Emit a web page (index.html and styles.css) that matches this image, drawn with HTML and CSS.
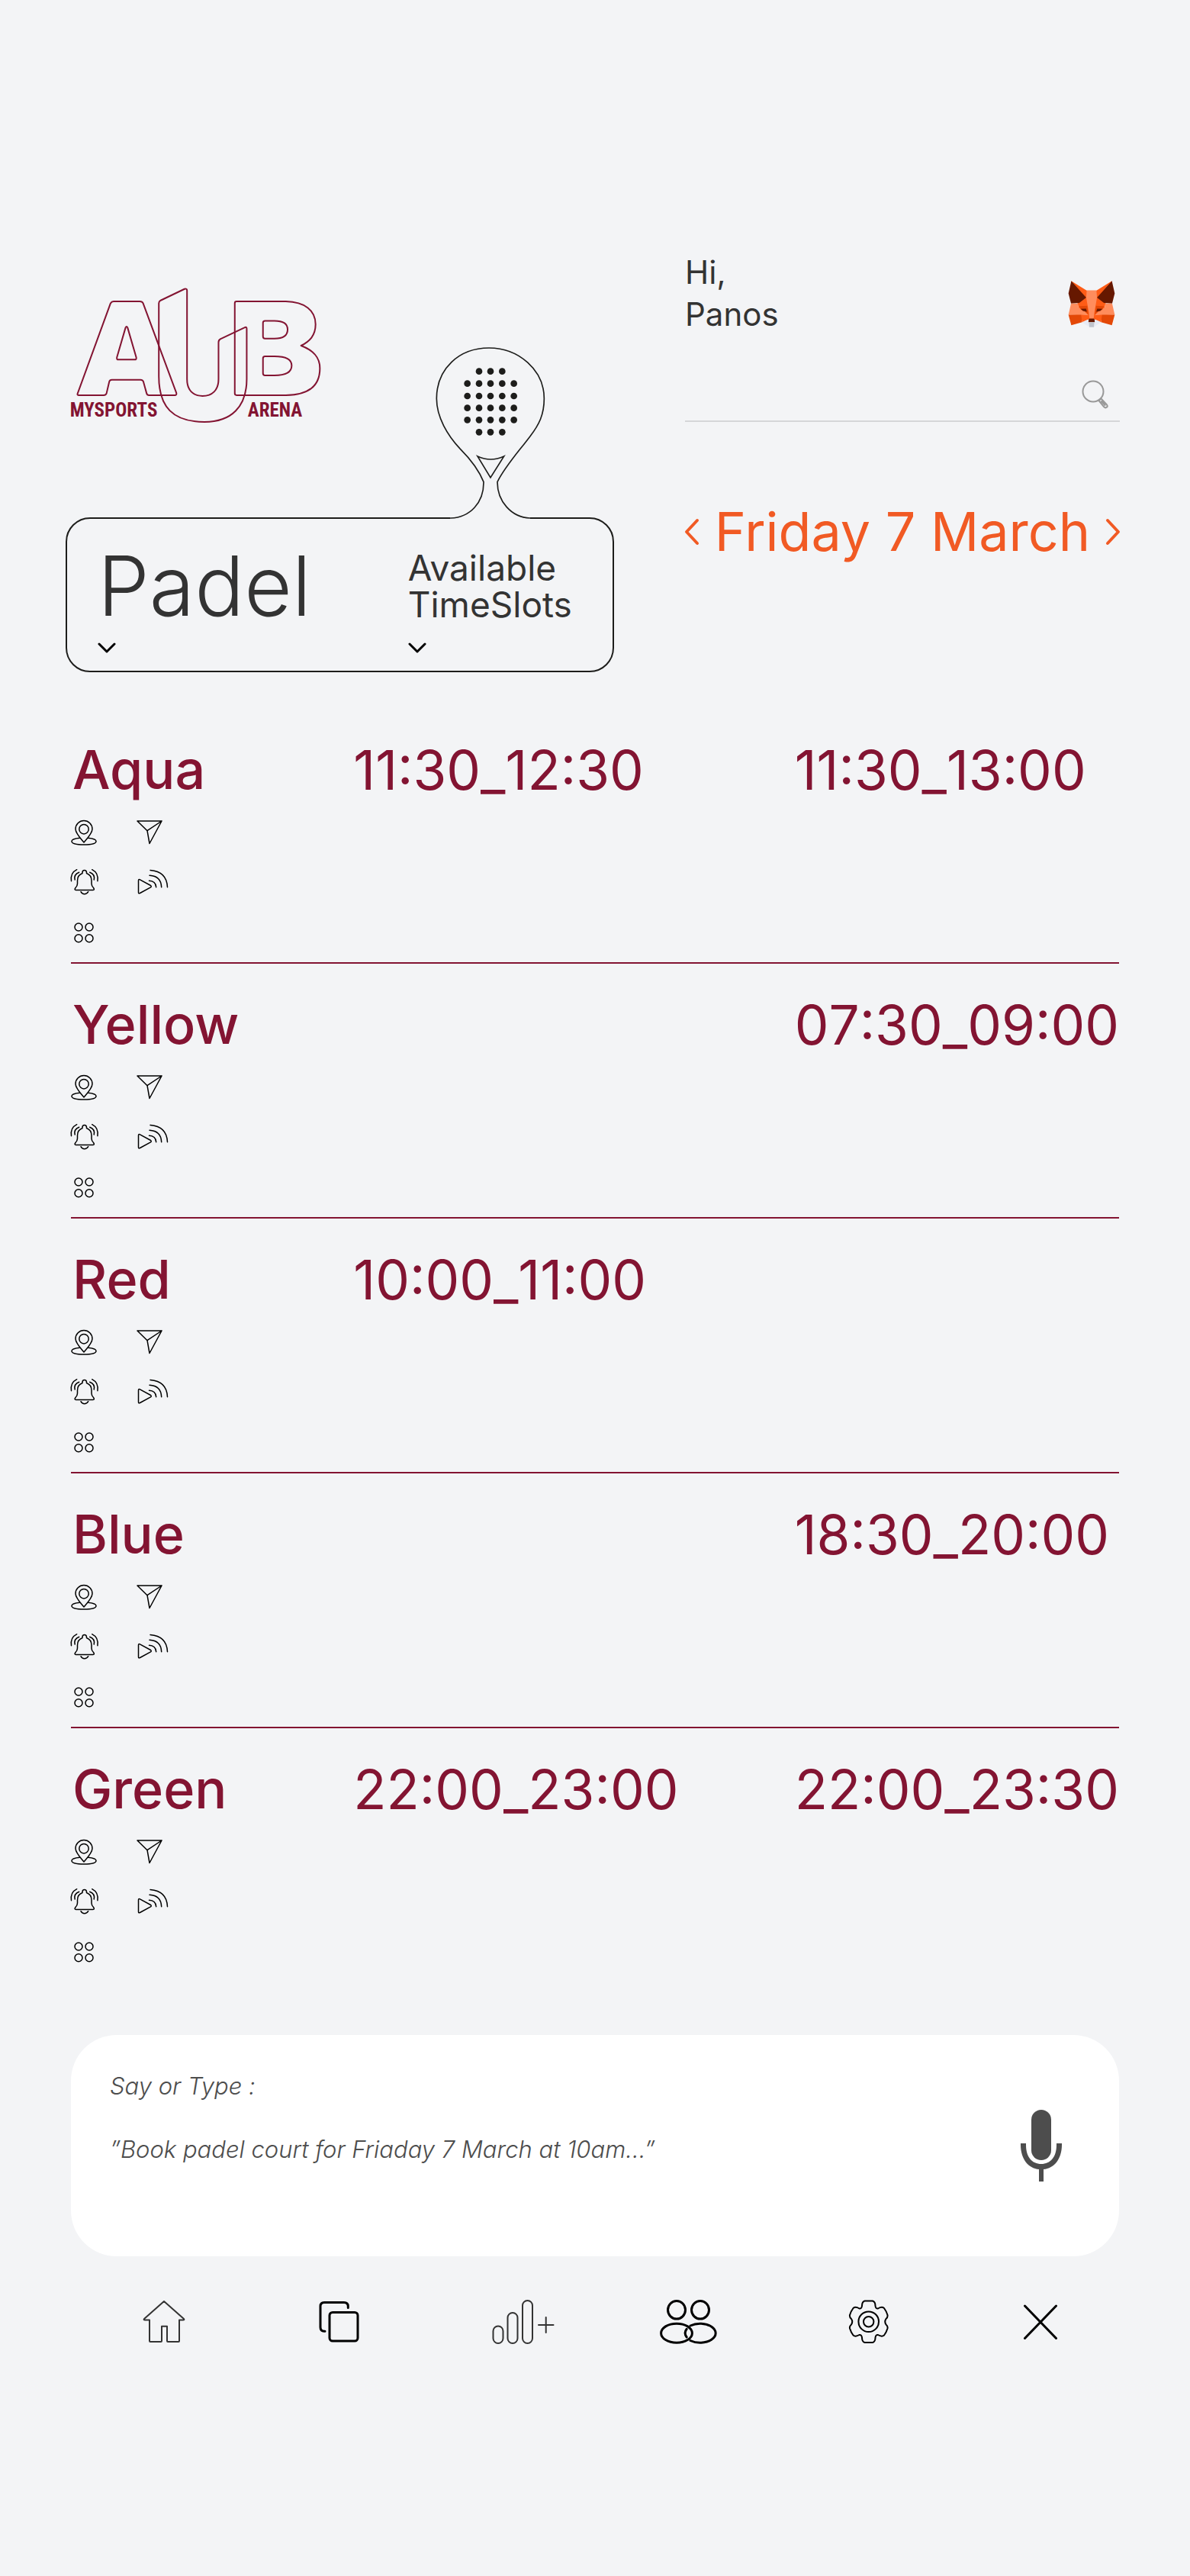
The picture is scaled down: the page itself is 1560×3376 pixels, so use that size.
FILE: index.html
```html
<!DOCTYPE html>
<html lang="en">
<head>
<meta charset="utf-8">
<meta name="viewport" content="width=device-width, initial-scale=1">
<title>MySports Arena – Padel courts</title>
<link rel="stylesheet" href="styles.css">
</head>
<body>
<svg class="sprite" aria-hidden="true">
  <symbol id="pin" viewBox="0 0 40 40"><path d="M19 33C16 29.500 8 21 8 15.500a11 11 0 0 1 22 0C30 21 22 29.500 19 33Z"/><circle cx="19" cy="15.700" r="6.200"/><path d="M13.500 27.300C7 28 3 29.500 3 31.500C3 34.500 10 36 19 36S35 34.500 35 31.500C35 29.500 31 28 24.500 27.300"/></symbol>
  <symbol id="plane" viewBox="0 0 40 40"><path d="M1 5H33L17 34.500L14 17.700ZM14 17.700L33 5"/></symbol>
  <symbol id="bell" viewBox="0 0 40 40"><path d="M17 9.500V8.500Q17 5.500 19.700 5.500T22.500 8.500V9.500Q29 12 29 19V23Q29 26 31.500 28.500Q33.500 31.500 31 31.500H8.500Q6 31.500 8 28.500Q10.500 26 10.500 23V19Q10.500 12 17 9.500ZM15 33.700Q16.500 36.700 19.700 36.700T24.700 33.700M9.700 4.700Q1 9 2.500 19.700M12.700 8.300Q5.500 11 7.200 18M29.700 4.700Q38.400 9 36.900 19.700M26.700 8.300Q33.900 11 32.200 18"/></symbol>
  <symbol id="cast" viewBox="0 0 44 40"><path d="M2.500 19Q2.500 16.800 4.500 17.900L18.500 25.500Q20 26.700 18.500 27.900L4.500 35.500Q2.500 36.500 2.500 34.500ZM16.500 19.300Q25 19.500 25.700 27.700M17 12.300Q32 13 32.700 27.700M18 5.500Q39.500 7 40.500 27.700"/></symbol>
  <symbol id="dots" viewBox="0 0 40 40"><circle cx="12" cy="16" r="5"/><circle cx="26" cy="16" r="5"/><circle cx="12" cy="30.700" r="5"/><circle cx="26" cy="30.700" r="5"/></symbol>
  <symbol id="down" viewBox="0 0 24 14"><path d="M2 2L12 12L22 2"/></symbol>
</svg>

<main class="app">
  <header class="header">
    <div class="left">
      <div class="brand">
        <svg class="logo" viewBox="60 48 1000 540" role="img" aria-label="AUB MySports Arena">
          <g class="logo-lines">
            <path d="M95 468L225 112Q229 105 237 105H340Q350 105 353 112L484 465Q486 474 478 474H376Q369 474 367 467L354 420Q351 413 343 413H230Q222 413 220 420L209 467Q206 474 198 474H100Q93 474 95 468Z"/>
            <path d="M284 208L250 325Q248 334 256 334H320Q328 334 326 325L292 208Q288 200 284 208Z"/>
            <path d="M415 112Q415 105 422 101L516 56Q526 53 526 62V410C526 455 550 477 587 477C625 477 650 455 650 410V266Q650 257 657 253L752 208Q761 203 761 212V410C761 520 700 579 595 579C470 579 415 520 415 400Z"/>
            <path d="M714 112Q714 105 721 105H915C990 107 1032 140 1032 195C1032 240 1008 262 975 279C1025 298 1049 325 1049 368C1049 440 1000 473 915 474H721Q714 474 714 467Z"/>
            <path d="M833 181H870C905 181 922 192 922 215C922 240 905 251 870 251H833Q825 251 825 243V189Q825 181 833 181Z"/>
            <path d="M833 321H870C915 321 938 334 938 357C938 383 915 396 870 396H833Q825 396 825 388V329Q825 321 833 321Z"/>
          </g>
          <text class="logo-text" x="65" y="557">MYSPORTS</text>
          <text class="logo-text" x="765" y="557">ARENA</text>
        </svg>
        <svg class="paddle" viewBox="90 45 438 675" aria-hidden="true">
          <path class="paddle-gap" d="M152 708H465V722H152Z"/>
          <path class="paddle-line" d="M152 717C230 714 283 655 282 575C262 525 220 475 190 445C140 392 97 320 97 247C97 130 185 48 303 48C420 48 520 135 520 247C520 310 500 350 465 395C420 455 365 515 336 575C336 650 390 714 465 717"/>
          <path class="paddle-line" d="M258 474Q310 498 362 474L309 558Z"/>
          <g class="paddle-dots">
            <circle cx="264" cy="140" r="13"/><circle cx="309" cy="140" r="13"/><circle cx="355" cy="140" r="13"/>
            <circle cx="218" cy="188" r="13"/><circle cx="264" cy="188" r="13"/><circle cx="309" cy="188" r="13"/><circle cx="355" cy="188" r="13"/><circle cx="401" cy="188" r="13"/>
            <circle cx="218" cy="237" r="13"/><circle cx="264" cy="237" r="13"/><circle cx="309" cy="237" r="13"/><circle cx="355" cy="237" r="13"/><circle cx="401" cy="237" r="13"/>
            <circle cx="218" cy="284" r="13"/><circle cx="264" cy="284" r="13"/><circle cx="309" cy="284" r="13"/><circle cx="355" cy="284" r="13"/><circle cx="401" cy="284" r="13"/>
            <circle cx="218" cy="331" r="13"/><circle cx="264" cy="331" r="13"/><circle cx="309" cy="331" r="13"/><circle cx="355" cy="331" r="13"/><circle cx="401" cy="331" r="13"/>
            <circle cx="264" cy="379" r="13"/><circle cx="309" cy="379" r="13"/><circle cx="355" cy="379" r="13"/>
          </g>
        </svg>
      </div>
      <div class="picker">
        <button class="pick" type="button" aria-haspopup="listbox">
          <span class="pick-sport">Padel</span>
          <svg class="pick-arrow" aria-hidden="true"><use href="#down"/></svg>
        </button>
        <button class="pick" type="button" aria-haspopup="listbox">
          <span class="pick-slots">Available<br>TimeSlots</span>
          <svg class="pick-arrow" aria-hidden="true"><use href="#down"/></svg>
        </button>
      </div>
    </div>

    <div class="right">
      <div class="user">
        <p class="greeting">Hi,<br>Panos</p>
        <svg class="fox" viewBox="60 56 184 184" role="img" aria-label="Profile">
          <path fill="#ff5c16" d="M73 57L133 94H171L231 57L205 150L190 210L152 205L114 210L99 150Z"/>
          <path fill="#661800" d="M73 57L62 105L72 144L104 142L131 121ZM231 57L242 105L232 144L200 142L173 121Z"/>
          <path fill="#ff8d5d" d="M133 94H171L173 121L163 178L160 204H144L141 178L131 121ZM72 144H99L101 160L120 170L140 190H112L62 188ZM232 144H205L203 160L184 170L164 190H192L242 188Z"/>
          <path fill="#e34807" d="M62 188H112L115 217L73 229ZM242 188H192L189 217L231 229ZM104 155L135 153L140 188L128 176L110 168ZM200 155L169 153L164 188L176 176L194 168Z"/>
          <path fill="#661800" d="M110 165L130 164L134 176L118 173ZM194 165L174 164L170 176L186 173ZM141 203H163L165 217H139Z"/>
          <path fill="#ff5c16" d="M112 188L140 190L143 204L115 217ZM192 188L164 190L161 204L189 217Z"/>
          <path fill="#e7ebf6" d="M115 218L141 206L139 217L142 235ZM189 218L163 206L165 217L162 235Z"/>
          <path fill="#c0c4cd" d="M141 217H163L161 236H143Z"/>
        </svg>
      </div>
      <form class="search">
        <input class="search-input" type="search" aria-label="Search">
        <button class="search-button" type="button" aria-label="Search">
          <svg viewBox="0 0 36 40"><circle cx="15" cy="16" r="13.500"/><path d="M22.500 28L25.500 25.500L33 33.500Q34.500 35.500 32.800 36.800T29.300 36.300ZM26 29L30.500 34"/></svg>
        </button>
      </form>
      <div class="date">
        <button class="date-arrow" type="button" aria-label="Previous day"><svg viewBox="0 0 18 34"><path d="M16 2L2 17L16 32"/></svg></button>
        <span class="date-text">Friday 7 March</span>
        <button class="date-arrow" type="button" aria-label="Next day"><svg viewBox="0 0 18 34"><path d="M2 2L16 17L2 32"/></svg></button>
      </div>
    </div>
  </header>

  <section class="courts" aria-label="Available courts">
    <article class="court">
      <div class="court-info">
        <h2 class="court-name">Aqua</h2>
        <div class="actions">
          <button type="button" aria-label="Location"><svg><use href="#pin"/></svg></button>
          <button type="button" aria-label="Send"><svg><use href="#plane"/></svg></button>
          <button type="button" aria-label="Alert"><svg><use href="#bell"/></svg></button>
          <button type="button" aria-label="Live stream"><svg class="wide"><use href="#cast"/></svg></button>
          <button type="button" aria-label="More"><svg><use href="#dots"/></svg></button>
        </div>
      </div>
      <button class="slot slot-hour" type="button">11:30_12:30</button>
      <button class="slot slot-long" type="button">11:30_13:00</button>
    </article>
    <article class="court">
      <div class="court-info">
        <h2 class="court-name">Yellow</h2>
        <div class="actions">
          <button type="button" aria-label="Location"><svg><use href="#pin"/></svg></button>
          <button type="button" aria-label="Send"><svg><use href="#plane"/></svg></button>
          <button type="button" aria-label="Alert"><svg><use href="#bell"/></svg></button>
          <button type="button" aria-label="Live stream"><svg class="wide"><use href="#cast"/></svg></button>
          <button type="button" aria-label="More"><svg><use href="#dots"/></svg></button>
        </div>
      </div>
      <button class="slot slot-long" type="button">07:30_09:00</button>
    </article>
    <article class="court">
      <div class="court-info">
        <h2 class="court-name">Red</h2>
        <div class="actions">
          <button type="button" aria-label="Location"><svg><use href="#pin"/></svg></button>
          <button type="button" aria-label="Send"><svg><use href="#plane"/></svg></button>
          <button type="button" aria-label="Alert"><svg><use href="#bell"/></svg></button>
          <button type="button" aria-label="Live stream"><svg class="wide"><use href="#cast"/></svg></button>
          <button type="button" aria-label="More"><svg><use href="#dots"/></svg></button>
        </div>
      </div>
      <button class="slot slot-hour" type="button">10:00_11:00</button>
    </article>
    <article class="court">
      <div class="court-info">
        <h2 class="court-name">Blue</h2>
        <div class="actions">
          <button type="button" aria-label="Location"><svg><use href="#pin"/></svg></button>
          <button type="button" aria-label="Send"><svg><use href="#plane"/></svg></button>
          <button type="button" aria-label="Alert"><svg><use href="#bell"/></svg></button>
          <button type="button" aria-label="Live stream"><svg class="wide"><use href="#cast"/></svg></button>
          <button type="button" aria-label="More"><svg><use href="#dots"/></svg></button>
        </div>
      </div>
      <button class="slot slot-long" type="button">18:30_20:00</button>
    </article>
    <article class="court">
      <div class="court-info">
        <h2 class="court-name">Green</h2>
        <div class="actions">
          <button type="button" aria-label="Location"><svg><use href="#pin"/></svg></button>
          <button type="button" aria-label="Send"><svg><use href="#plane"/></svg></button>
          <button type="button" aria-label="Alert"><svg><use href="#bell"/></svg></button>
          <button type="button" aria-label="Live stream"><svg class="wide"><use href="#cast"/></svg></button>
          <button type="button" aria-label="More"><svg><use href="#dots"/></svg></button>
        </div>
      </div>
      <button class="slot slot-hour" type="button">22:00_23:00</button>
      <button class="slot slot-long" type="button">22:00_23:30</button>
    </article>
  </section>

  <form class="prompt">
    <div class="prompt-body">
      <label class="prompt-label" for="request">Say or Type :</label>
      <input class="prompt-input" id="request" type="text" placeholder="”Book padel court for Friaday 7 March at 10am...”">
    </div>
    <button class="mic" type="button" aria-label="Speak">
      <svg viewBox="0 0 54 94"><rect x="14" y="0" width="26" height="66" rx="13"/><path d="M0 44H7V46C7 62 15 71 27 71S47 62 47 46V44H54V46C54 64 44 77 30 78V94H24V78C10 77 0 64 0 46Z"/></svg>
    </button>
  </form>

  <nav class="tabs" aria-label="Main">
    <a class="tab tab-soft" href="#home" aria-label="Home"><svg width="56" height="60" viewBox="0 0 56 60"><path d="M28 3L2 26Q1 27.500 3 27.500H9V55Q9 56 10 56H24Q25 56 25 55V35.700H32V55Q32 56 33 56H47Q48 56 48 55V27.500H53Q55 27.500 54 26Z"/></svg></a>
    <a class="tab tab-bold" href="#bookings" aria-label="Bookings"><svg width="56" height="60" viewBox="0 0 56 60"><rect x="15" y="17.500" width="37" height="37.500" rx="4"/><path d="M9 42.300H8Q3 42 3 37V9.500Q3 4.500 8 4.500H34Q39.300 4.500 39.300 9.500V11.500"/></svg></a>
    <a class="tab tab-soft" href="#stats" aria-label="Add stats"><svg width="82" height="60" viewBox="0 0 82 60"><rect x="1.500" y="35.500" width="13" height="22.500" rx="6.500"/><rect x="20.500" y="18" width="13" height="40" rx="6.500"/><rect x="40" y="2" width="13" height="56" rx="6.500"/><path d="M61 34H80.500M70.700 24V44"/></svg></a>
    <a class="tab tab-bold" href="#players" aria-label="Players"><svg width="76" height="60" viewBox="0 0 76 60"><ellipse cx="22" cy="14.300" rx="11.500" ry="11.800"/><ellipse cx="53" cy="14.300" rx="11.500" ry="11.800"/><ellipse cx="22" cy="44.700" rx="20.400" ry="12.500"/><path d="M40 35A20.400 12.500 0 1 1 40 54.500M35.200 39.300Q31 44.500 35.200 50"/></svg></a>
    <a class="tab" href="#settings" aria-label="Settings"><svg width="56" height="60" viewBox="0 0 56 60"><path d="M22.500 2.500H33Q36.500 3.500 36.500 9Q37 13 40 12.500Q45 9.500 48 12Q51 16 52.500 21Q53 24 50.500 26Q48 29.700 50.500 33.500Q53 35.500 52.500 38.500Q51 43.500 48 47.500Q45 50 40 47Q37 46.500 36.500 50.500Q36.500 56 33 57H22.500Q19 56 19 50.500Q18.500 46.500 15.500 47Q10.500 50 7.500 47.500Q4.500 43.500 3 38.500Q2.500 35.500 5 33.500Q7.500 29.700 5 26Q2.500 24 3 21Q4.500 16 7.500 12Q10.500 9.500 15.500 12.500Q18.500 13 19 9Q19 3.500 22.500 2.500Z"/><circle cx="27.700" cy="29.700" r="13.300"/><circle cx="27.700" cy="29.700" r="6.700"/></svg></a>
    <a class="tab tab-bold" href="#close" aria-label="Close"><svg width="48" height="60" viewBox="0 0 48 60"><path d="M3.500 9L44.500 51.500M44.500 9L3.500 51.500"/></svg></a>
  </nav>
</main>
</body>
</html>
```
FILE: styles.css
```css
* { box-sizing: border-box; }

body {
  margin: 0;
  min-height: 100vh;
  background: #f3f4f6;
  color: #333;
  font-family: Inter, "Liberation Sans", sans-serif;
}

button {
  margin: 0;
  padding: 0;
  border: 0;
  background: none;
  color: inherit;
  font: inherit;
  text-align: left;
  cursor: pointer;
}

svg {
  display: block;
  overflow: visible;
  fill: none;
  stroke-linecap: round;
  stroke-linejoin: round;
}

.sprite { display: none; }

.app { padding: 329px 0 64px; }

/* Header */
.header {
  display: grid;
  grid-template-columns: minmax(0, 719fr) minmax(0, 570fr);
  column-gap: 93px;
  padding: 0 92px 0 86px;
}

.left { padding-top: 47px; }

.brand {
  display: flex;
  justify-content: space-between;
  padding: 0 89px 0 4px;
}

.logo { width: 333px; height: 180px; }
.logo-lines { stroke: #831432; stroke-width: 6; }
.logo-text {
  fill: #831432;
  font: bold 75px "Roboto Condensed", "Liberation Sans Narrow", sans-serif;
}

.paddle {
  position: relative;
  width: 146px;
  height: 225px;
  margin: 79px 0 -2px;
}
.paddle-gap { fill: #f3f4f6; }
.paddle-line { stroke: #1d1d1b; stroke-width: 5; stroke-linecap: butt; stroke-linejoin: miter; }
.paddle-dots { fill: #1d1d1b; }

.picker {
  display: grid;
  grid-template-columns: 408fr 269fr;
  padding: 40px 0 23px 40px;
  border: 2px solid #1d1d1b;
  border-radius: 32px;
}
.pick { display: flex; flex-direction: column; gap: 26px; }
.pick-sport { font-size: 108px; font-weight: 300; line-height: 96px; }
.pick-slots { font-size: 46px; line-height: 48px; }
.pick-arrow { width: 24px; height: 14px; stroke: #000; stroke-width: 3; }

.user { display: flex; justify-content: space-between; align-items: center; padding-right: 6px; }
.greeting { margin: 0; font-size: 42px; line-height: 55px; }
.fox { width: 62px; height: 62px; margin-top: 30px; }

.search {
  display: flex;
  align-items: center;
  height: 114px;
  padding: 44px 14px 0 0;
  border-bottom: 2px solid #d5d6d8;
}
.search-input {
  flex: 1;
  min-width: 0;
  height: 60px;
  border: 0;
  outline: 0;
  background: none;
  font: inherit;
  font-size: 36px;
}
.search-button svg { width: 36px; height: 40px; stroke: #999; stroke-width: 2; }

.date {
  display: flex;
  align-items: center;
  justify-content: space-between;
  margin-top: 104px;
  color: #f15a24;
}
.date-text { font-size: 70px; line-height: 80px; white-space: nowrap; }
.date-arrow svg { width: 18px; height: 34px; stroke: #f15a24; stroke-width: 4; }

/* Courts */
.courts { padding: 48px 93px 0; color: #831432; }

.court {
  display: grid;
  grid-template-columns: 370fr 578fr 425fr;
  align-items: start;
  padding: 40px 0 22px;
  border-bottom: 2px solid #831432;
}
.court:last-child { border-bottom: 0; }
.court-name { margin: 0; padding-left: 2px; font-size: 70px; font-weight: 500; line-height: 80px; }

.actions {
  display: grid;
  grid-template-columns: 40px 40px;
  gap: 24px 48px;
  margin: 22px 0 0 -2px;
}
.actions svg { width: 40px; height: 40px; stroke: #000; stroke-width: 1.5; }
.actions .wide { width: 44px; }

.slot { grid-row: 1; font-size: 71px; font-kerning: none; line-height: 80px; white-space: nowrap; }
.slot-hour { grid-column: 2; }
.slot-long { grid-column: 3; }

/* Prompt */
.prompt {
  display: flex;
  align-items: flex-start;
  margin: 70px 93px 0;
  padding: 43px 75px 98px 51px;
  border-radius: 60px;
  background: #fff;
  color: #4d4d4d;
}
.prompt-body { display: flex; flex: 1; flex-direction: column; gap: 35px; min-width: 0; }
.prompt-label,
.prompt-input {
  height: 48px;
  font-size: 31px;
  font-style: italic;
  font-weight: 300;
  line-height: 48px;
}
.prompt-input {
  padding: 0;
  border: 0;
  outline: 0;
  background: none;
  color: inherit;
  font-family: inherit;
}
.prompt-input::placeholder { color: #4d4d4d; opacity: 1; }
.mic { padding-top: 55px; }
.mic svg { width: 54px; height: 94px; fill: #4d4d4d; }

/* Bottom navigation */
.tabs {
  display: grid;
  grid-template-columns: 230fr 229fr 220fr 247fr 229fr 46fr;
  padding: 56px 172px 0 187px;
}
.tab { stroke: #000; stroke-width: 2; }
.tab-soft { stroke: #333; }
.tab-bold { stroke-width: 3; }
```
